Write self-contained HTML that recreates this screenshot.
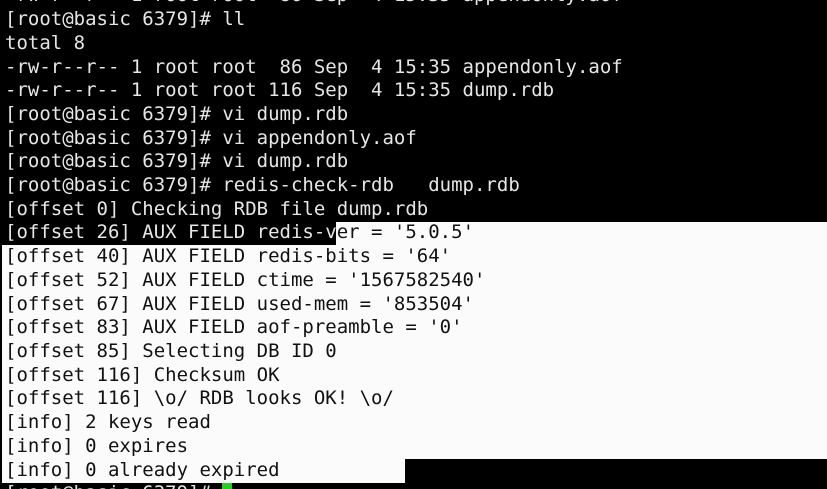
<!DOCTYPE html>
<html><head><meta charset="utf-8"><style>
html,body{margin:0;padding:0;background:#000;width:827px;height:489px;overflow:hidden;position:relative}
.w{position:absolute;background:#fbfbfb}
pre{position:absolute;left:5px;top:-15.55px;margin:0;font-family:"DejaVu Sans Mono","Liberation Mono",monospace;font-size:19px;line-height:23.7px;color:#e6e6e6;white-space:pre}
.b{color:#111}
.cur{display:inline-block;width:10px;height:20px;background:#1fd31f;vertical-align:-4px}
</style></head><body>
<div class="w" style="left:336px;top:222px;width:491px;height:24px"></div>
<div class="w" style="left:2px;top:245px;width:825px;height:214px"></div>
<div class="w" style="left:2px;top:458px;width:403px;height:25px"></div>
<pre>-rw-r--r-- 1 root root  86 Sep  4 15:35 appendonly.aof
[root@basic 6379]# ll
total 8
-rw-r--r-- 1 root root  86 Sep  4 15:35 appendonly.aof
-rw-r--r-- 1 root root 116 Sep  4 15:35 dump.rdb
[root@basic 6379]# vi dump.rdb
[root@basic 6379]# vi appendonly.aof
[root@basic 6379]# vi dump.rdb
[root@basic 6379]# redis-check-rdb   dump.rdb
[offset 0] Checking RDB file dump.rdb
[offset 26] AUX FIELD redis-v<span class="b">er = '5.0.5'</span>
<span class="b">[offset 40] AUX FIELD redis-bits = '64'
[offset 52] AUX FIELD ctime = '1567582540'
[offset 67] AUX FIELD used-mem = '853504'
[offset 83] AUX FIELD aof-preamble = '0'
[offset 85] Selecting DB ID 0
[offset 116] Checksum OK
[offset 116] \o/ RDB looks OK! \o/
[info] 2 keys read
[info] 0 expires
[info] 0 already expired</span>
[root@basic 6379]# <span class="cur"></span></pre>
</body></html>
